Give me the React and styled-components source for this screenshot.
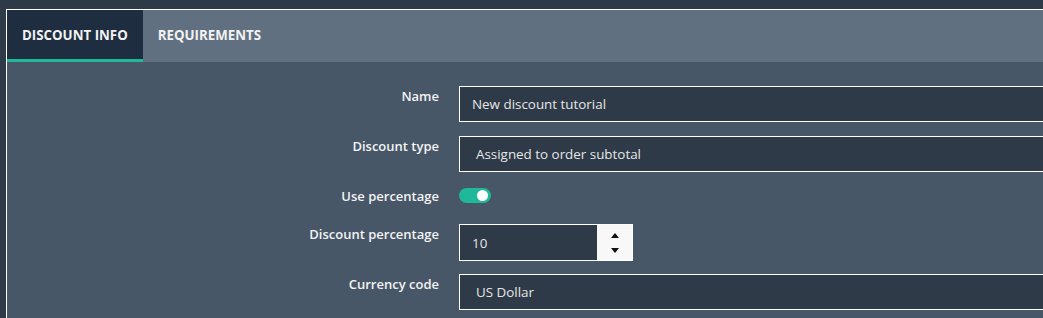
import styled, { createGlobalStyle } from "styled-components";

const GlobalStyle = createGlobalStyle`
  html, body {
    margin: 0;
    padding: 0;
    background: #2e3a47;
    overflow: hidden;
  }
  body {
    font-family: "Open Sans", "Noto Sans", sans-serif;
  }
  * {
    box-sizing: border-box;
  }
`;

export default function App() {
  return (
    <>
      <GlobalStyle />
      <Page>
        <Panel>
          <TabBar>
            <Tab $active>DISCOUNT INFO</Tab>
            <Tab>REQUIREMENTS</Tab>
          </TabBar>
          <FormBody>
            <Row>
              <Label>Name</Label>
              <TextInput>New discount tutorial</TextInput>
            </Row>
            <Row>
              <Label>Discount type</Label>
              <TextInput $select>Assigned to order subtotal</TextInput>
            </Row>
            <Row $short>
              <Label>Use percentage</Label>
              <Toggle>
                <Knob />
              </Toggle>
            </Row>
            <Row>
              <Label>Discount percentage</Label>
              <NumberBox>
                <NumberValue>10</NumberValue>
                <Spinner>
                  <Arrow />
                  <Arrow $down />
                </Spinner>
              </NumberBox>
            </Row>
            <Row>
              <Label>Currency code</Label>
              <TextInput $select>US Dollar</TextInput>
            </Row>
          </FormBody>
        </Panel>
      </Page>
    </>
  );
}

const Page = styled.div`
  width: 1043px;
  height: 318px;
  padding: 9px 0 0 6px;
  overflow: hidden;
`;

const Panel = styled.div`
  width: 1300px;
  border: 1px solid #ffffff;
  background: #475767;
`;

const TabBar = styled.div`
  display: flex;
  height: 52px;
  background: #617080;
`;

const Tab = styled.div`
  display: flex;
  align-items: center;
  padding: 0 15px 0 15px;
  font-size: 13.3px;
  font-weight: 700;
  color: #f2f2f2;
  background: ${(p) => (p.$active ? "#1e2d3f" : "transparent")};
  border-bottom: 3px solid ${(p) => (p.$active ? "#1fb89a" : "transparent")};
`;

const FormBody = styled.div`
  display: flex;
  flex-direction: column;
  gap: 14px;
  padding: 24px 0 20px;
`;

const Row = styled.div`
  display: grid;
  grid-template-columns: 432px 1fr;
  column-gap: 20px;
  align-items: start;
  height: ${(p) => (p.$short ? "24px" : "36px")};
`;

const Label = styled.div`
  padding-top: 1px;
  text-align: right;
  font-size: 13px;
  font-weight: 600;
  line-height: 18px;
  color: #f3f3f3;
`;

const TextInput = styled.div`
  height: 36px;
  display: flex;
  align-items: center;
  padding-left: ${(p) => (p.$select ? "16px" : "12px")};
  background: #2e3a47;
  border: 1px solid #ffffff;
  font-size: 13.4px;
  color: #e6e6e6;
`;

const Toggle = styled.div`
  position: relative;
  width: 32px;
  height: 15px;
  margin-top: 2px;
  border-radius: 8px;
  background: #1fb89a;
`;

const Knob = styled.div`
  position: absolute;
  top: 2px;
  right: 3px;
  width: 11px;
  height: 11px;
  border-radius: 50%;
  background: #ffffff;
`;

const NumberBox = styled.div`
  display: flex;
  width: 174px;
  height: 37px;
  border: 1px solid #ffffff;
  background: #2e3a47;
`;

const NumberValue = styled.div`
  flex: 1;
  display: flex;
  align-items: center;
  padding-left: 12px;
  font-size: 13.4px;
  color: #e6e6e6;
`;

const Spinner = styled.div`
  width: 35px;
  display: flex;
  flex-direction: column;
  align-items: center;
  justify-content: center;
  gap: 10px;
  background: #f8f8f8;
`;

const Arrow = styled.div`
  width: 0;
  height: 0;
  border-left: 4px solid transparent;
  border-right: 4px solid transparent;
  ${(p) =>
    p.$down
      ? "border-top: 5px solid #111;"
      : "border-bottom: 5px solid #111;"}
`;
